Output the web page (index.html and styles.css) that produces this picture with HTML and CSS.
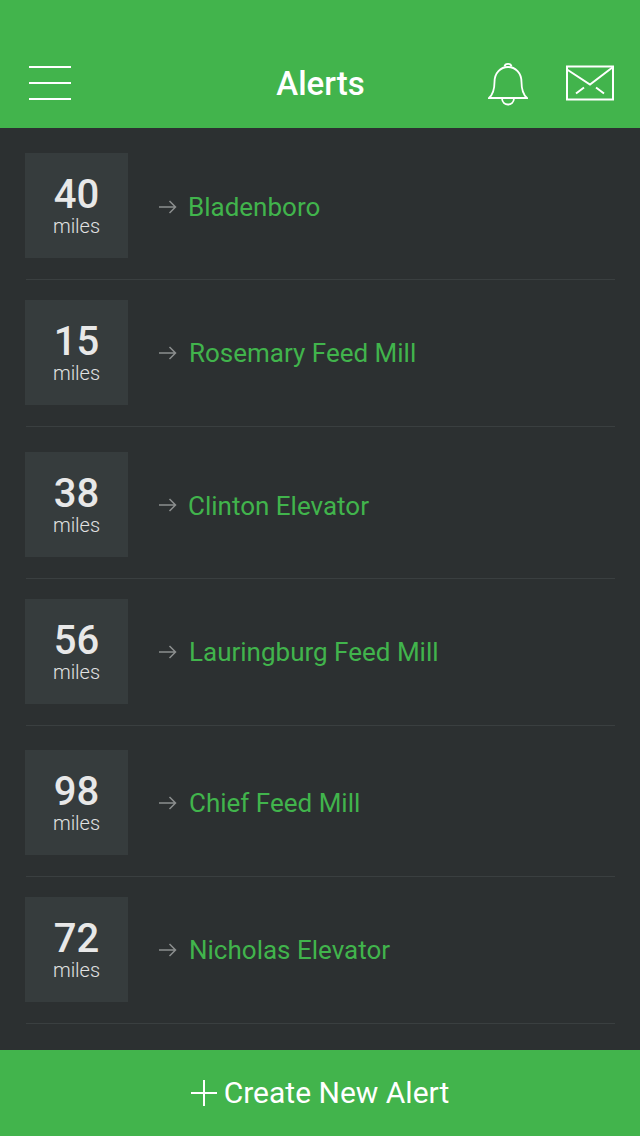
FILE: index.html
```html
<!DOCTYPE html>
<html lang="en">
<head>
  <meta charset="UTF-8" />
  <title>Alerts</title>
  <link rel="stylesheet" href="styles.css">
</head>
<body>
  <!-- Header -->
  <header class="topbar">
    <button class="menu-btn" aria-label="Menu"><span></span><span></span><span></span></button>
    <h1>Alerts</h1>
    <svg class="bell" width="40" height="44" viewBox="0 0 40 44" fill="none" stroke="#fff" stroke-width="1.800">
      <path d="M1 36 H39 C34.500 32 33.500 27 33.500 20 C33.500 11 27.500 5 20 5 C12.500 5 6.500 11 6.500 20 C6.500 27 5.500 32 1 36 Z"/>
      <path d="M16.500 4.500 C17 1 23 1 23.500 4.500"/>
      <path d="M14 36.500 C14.500 44.500 25.500 44.500 26 36.500"/>
    </svg>
    <svg class="mail" width="48" height="36" viewBox="0 0 48 36" fill="none" stroke="#fff" stroke-width="2">
      <rect x="1" y="1.500" width="46" height="33"/>
      <path d="M1 4.500 L24 19.500 L47 2"/>
      <path d="M10 28.500 L18 22.500 M30 22.500 L38 28.500"/>
    </svg>
  </header>

  <!-- Alert rows -->
  <ul class="alerts">
    <li class="alert">
      <div class="distance"><b>40</b><span>miles</span></div>
      <svg class="arrow" width="18" height="14" viewBox="0 0 18 14" fill="none" stroke="#8b8e8e" stroke-width="1.500"><path d="M0 7 H16.500 M10.500 1 L16.500 7 L10.500 13"/></svg>
      <a href="#">Bladenboro</a>
    </li>
    <li class="alert">
      <div class="distance"><b>15</b><span>miles</span></div>
      <svg class="arrow" width="18" height="14" viewBox="0 0 18 14" fill="none" stroke="#8b8e8e" stroke-width="1.500"><path d="M0 7 H16.500 M10.500 1 L16.500 7 L10.500 13"/></svg>
      <a href="#">Rosemary Feed Mill</a>
    </li>
    <li class="alert">
      <div class="distance"><b>38</b><span>miles</span></div>
      <svg class="arrow" width="18" height="14" viewBox="0 0 18 14" fill="none" stroke="#8b8e8e" stroke-width="1.500"><path d="M0 7 H16.500 M10.500 1 L16.500 7 L10.500 13"/></svg>
      <a href="#">Clinton Elevator</a>
    </li>
    <li class="alert">
      <div class="distance"><b>56</b><span>miles</span></div>
      <svg class="arrow" width="18" height="14" viewBox="0 0 18 14" fill="none" stroke="#8b8e8e" stroke-width="1.500"><path d="M0 7 H16.500 M10.500 1 L16.500 7 L10.500 13"/></svg>
      <a href="#">Lauringburg Feed Mill</a>
    </li>
    <li class="alert">
      <div class="distance"><b>98</b><span>miles</span></div>
      <svg class="arrow" width="18" height="14" viewBox="0 0 18 14" fill="none" stroke="#8b8e8e" stroke-width="1.500"><path d="M0 7 H16.500 M10.500 1 L16.500 7 L10.500 13"/></svg>
      <a href="#">Chief Feed Mill</a>
    </li>
    <li class="alert">
      <div class="distance"><b>72</b><span>miles</span></div>
      <svg class="arrow" width="18" height="14" viewBox="0 0 18 14" fill="none" stroke="#8b8e8e" stroke-width="1.500"><path d="M0 7 H16.500 M10.500 1 L16.500 7 L10.500 13"/></svg>
      <a href="#">Nicholas Elevator</a>
    </li>
  </ul>

  <!-- Footer action -->
  <footer class="create">
    <svg width="26" height="26" viewBox="0 0 26 26" stroke="#fff" stroke-width="2"><path d="M0 13 H26 M13 0 V26"/></svg>
    <span>Create New Alert</span>
  </footer>
</body>
</html>
```

FILE: styles.css
```css
/* ---- Global styles ---- */
html, body {
  margin: 0;
  padding: 0;
  height: 100%;
  overflow: hidden;
  background-color: #2c3031;
  font-family: Roboto, sans-serif;
}

body {
  display: flex;
  flex-direction: column;
  height: 1136px;
}

/* ---- Header ---- */
.topbar {
  height: 128px;
  box-sizing: border-box;
  background: #42b44c;
  position: relative;
  display: flex;
  align-items: flex-start;
}
.topbar h1 {
  margin: 0;
  position: absolute;
  left: 1px;
  right: 0;
  top: 65px;
  text-align: center;
  color: #fff;
  font-size: 33px;
  line-height: 38px;
  font-weight: 500;
}
.menu-btn {
  display: flex;
  flex-direction: column;
  gap: 14px;
  margin: 66px 0 0 29px;
  padding: 0;
  border: 0;
  background: none;
}
.menu-btn span {
  display: block;
  width: 42px;
  height: 2px;
  background: #fff;
}
.bell {
  margin: 62px 0 0 417px;
}
.mail {
  margin: 65px 0 0 38px;
}

/* ---- Alert rows ---- */
.alerts {
  list-style: none;
  margin: 0;
  padding: 0;
  flex: 1;
}
.alert {
  display: flex;
  align-items: center;
  margin-left: 25px;
  padding: 20px 0 22px;
  position: relative;
}
.alert:nth-child(odd) {
  padding-top: 25px;
}
.alert:nth-child(5) {
  padding-top: 24px;
}
/* divider starts a pixel in from the box */
.alert::after {
  content: "";
  position: absolute;
  left: 1px;
  width: 589px;
  bottom: 0;
  height: 1px;
  background: #3a3f40;
}
.distance {
  width: 103px;
  height: 105px;
  background: #363c3d;
  display: flex;
  flex-direction: column;
  align-items: center;
  box-sizing: border-box;
  padding-top: 21px;
}
.distance b {
  color: #e8e8e8;
  font-size: 40px;
  line-height: 41px;
  font-weight: 500;
}
.distance span {
  color: #fff;
  opacity: 0.85;
  font-size: 20px;
  line-height: 22px;
  font-weight: 300;
}
.arrow {
  margin: 0 0 0 31px;
}
.alert a {
  margin: 1px 0 0 12px;
  color: #41b44c;
  font-size: 26px;
  text-decoration: none;
}
/* first and third names sit slightly lower and further left */
.alert:nth-child(1) a,
.alert:nth-child(3) a {
  margin: 3px 0 0 11px;
}
.alert:nth-child(1) .arrow {
  margin-top: 2px;
}

/* ---- Footer action ---- */
.create {
  height: 86px;
  background: #42b44c;
  color: #fff;
  display: flex;
  justify-content: center;
  align-items: center;
  gap: 7px;
  font-size: 30px;
}
.create span {
  margin-bottom: 2px;
}
```
